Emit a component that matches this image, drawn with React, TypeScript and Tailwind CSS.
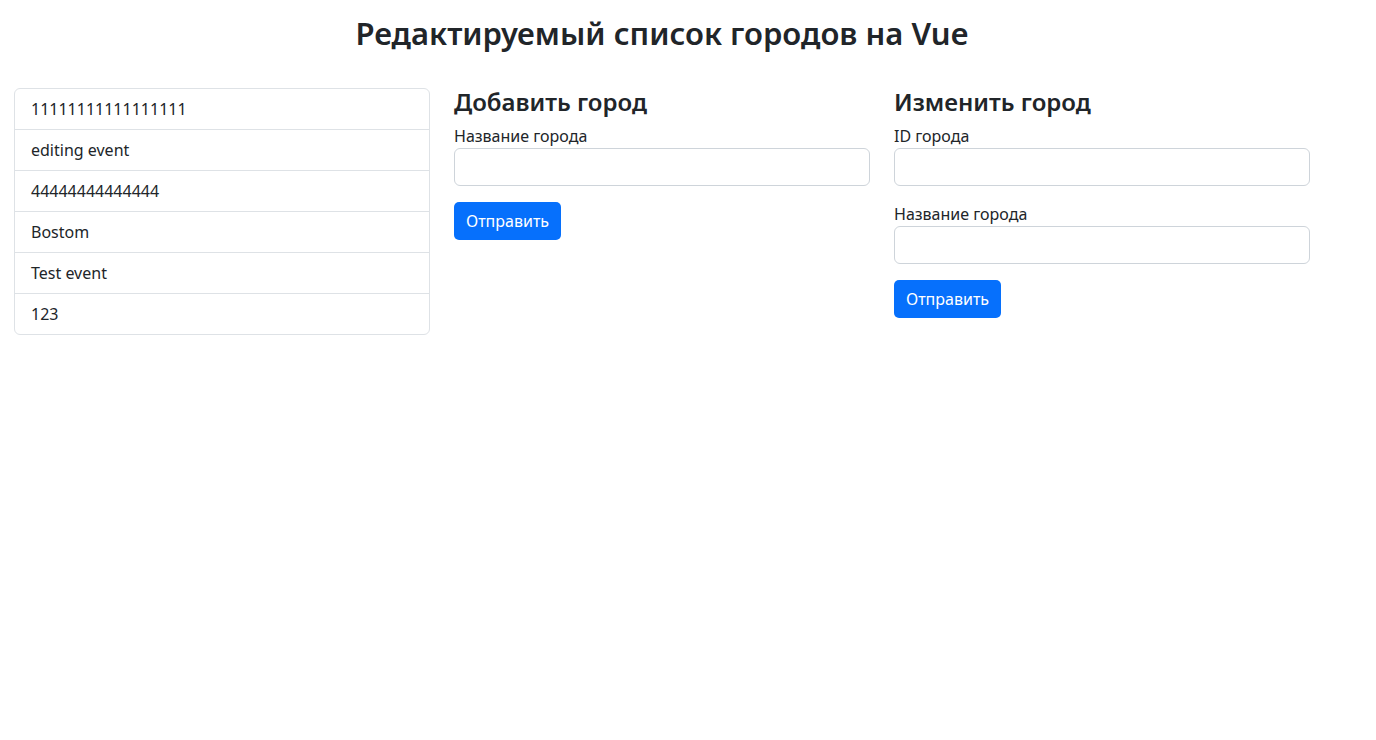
const cities = ['11111111111111111', 'editing event', '44444444444444', 'Bostom', 'Test event', '123'];

function Field({ label }: { label: string }) {
  return (
    <div className="mb-4">
      <label className="block leading-6">{label}</label>
      <input
        type="text"
        className="block h-[38px] w-full rounded-md border border-[#ced4da] bg-white px-3 py-1.5 text-base outline-none"
      />
    </div>
  );
}

function SubmitButton() {
  return (
    <button className="h-[38px] rounded-[5px] bg-[#0670fc] px-3 text-base leading-6 text-white">
      Отправить
    </button>
  );
}

export default function App() {
  return (
    <div className="min-h-screen bg-white text-[#212529] [font-family:'Noto_Sans',sans-serif]">
      <div className="ml-[2px] w-[1320px] px-3">
        <h1 className="pt-[14px] pb-[36px] text-center text-[31px] font-semibold leading-[38.4px]">
          Редактируемый список городов на Vue
        </h1>
        <div className="grid grid-cols-3 gap-6">
          <ul className="self-start overflow-hidden rounded-md border border-[#dee2e6]">
            {cities.map((c, i) => (
              <li key={i} className="border-[#dee2e6] px-4 py-2 leading-6 [&:not(:first-child)]:border-t">
                {c}
              </li>
            ))}
          </ul>
          <div>
            <h4 className="mb-2 text-2xl font-semibold leading-7">Добавить город</h4>
            <Field label="Название города" />
            <SubmitButton />
          </div>
          <div>
            <h4 className="mb-2 text-2xl font-semibold leading-7">Изменить город</h4>
            <Field label="ID города" />
            <Field label="Название города" />
            <SubmitButton />
          </div>
        </div>
      </div>
    </div>
  );
}
